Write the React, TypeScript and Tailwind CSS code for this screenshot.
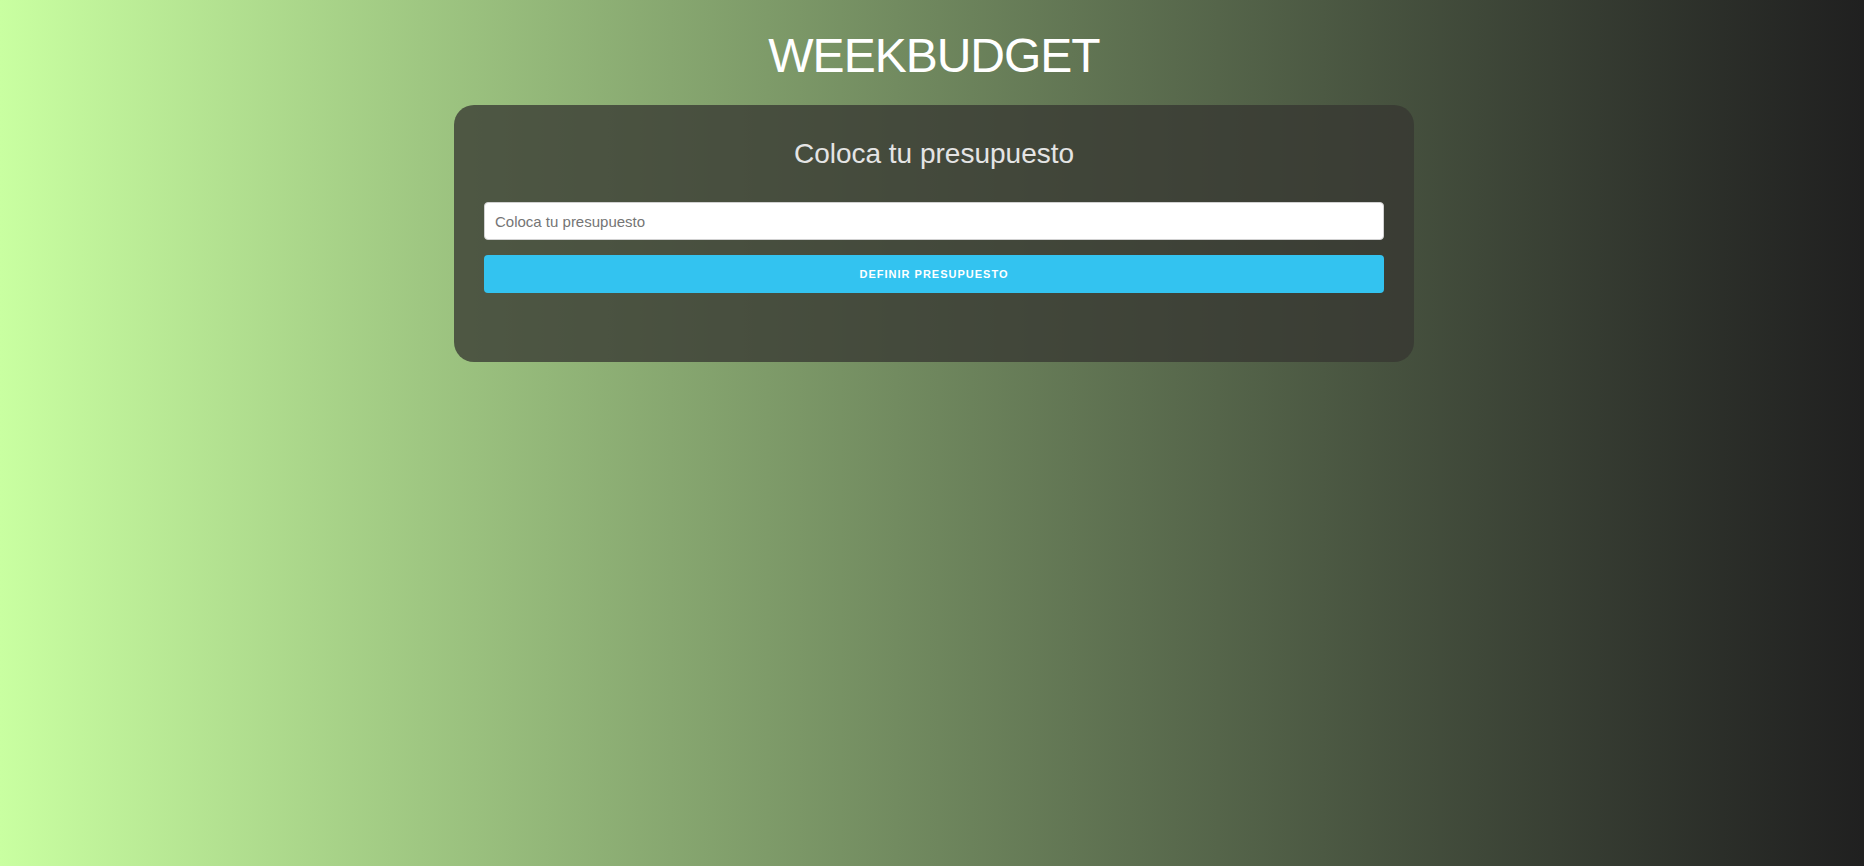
import React from 'react'

const App: React.FC = () => {
    return (
        <div className="min-h-screen w-full bg-gradient-to-r from-[#c9ffa1] to-[#202020] font-['Liberation_Sans',Arial,sans-serif] pt-[27px] pl-[4px]">
            <h1 className="text-center text-[48px] leading-[1.2] tracking-[-1px] text-white">
                WEEKBUDGET
            </h1>
            <section className="mx-auto mt-[20px] w-[960px] h-[257px] rounded-[20px] bg-[#363632]/[0.77] px-[30px] pt-[30px]">
                <h2 className="text-center text-[28px] leading-[1.35] text-[#e4e4e4]">
                    Coloca tu presupuesto
                </h2>
                <form className="mt-[30px] flex flex-col gap-[15px]">
                    <input
                        type="number"
                        placeholder="Coloca tu presupuesto"
                        className="h-[38px] w-full rounded-[4px] border border-[#d1d1d1] bg-white px-[10px] text-[15px] text-[#333] placeholder:text-[#757575] outline-none"
                    />
                    <button
                        type="button"
                        className="h-[38px] w-full rounded-[4px] bg-[#33c3f0] text-[11px] font-bold uppercase tracking-[1px] text-white"
                    >
                        Definir presupuesto
                    </button>
                </form>
            </section>
        </div>
    )
}

export default App
